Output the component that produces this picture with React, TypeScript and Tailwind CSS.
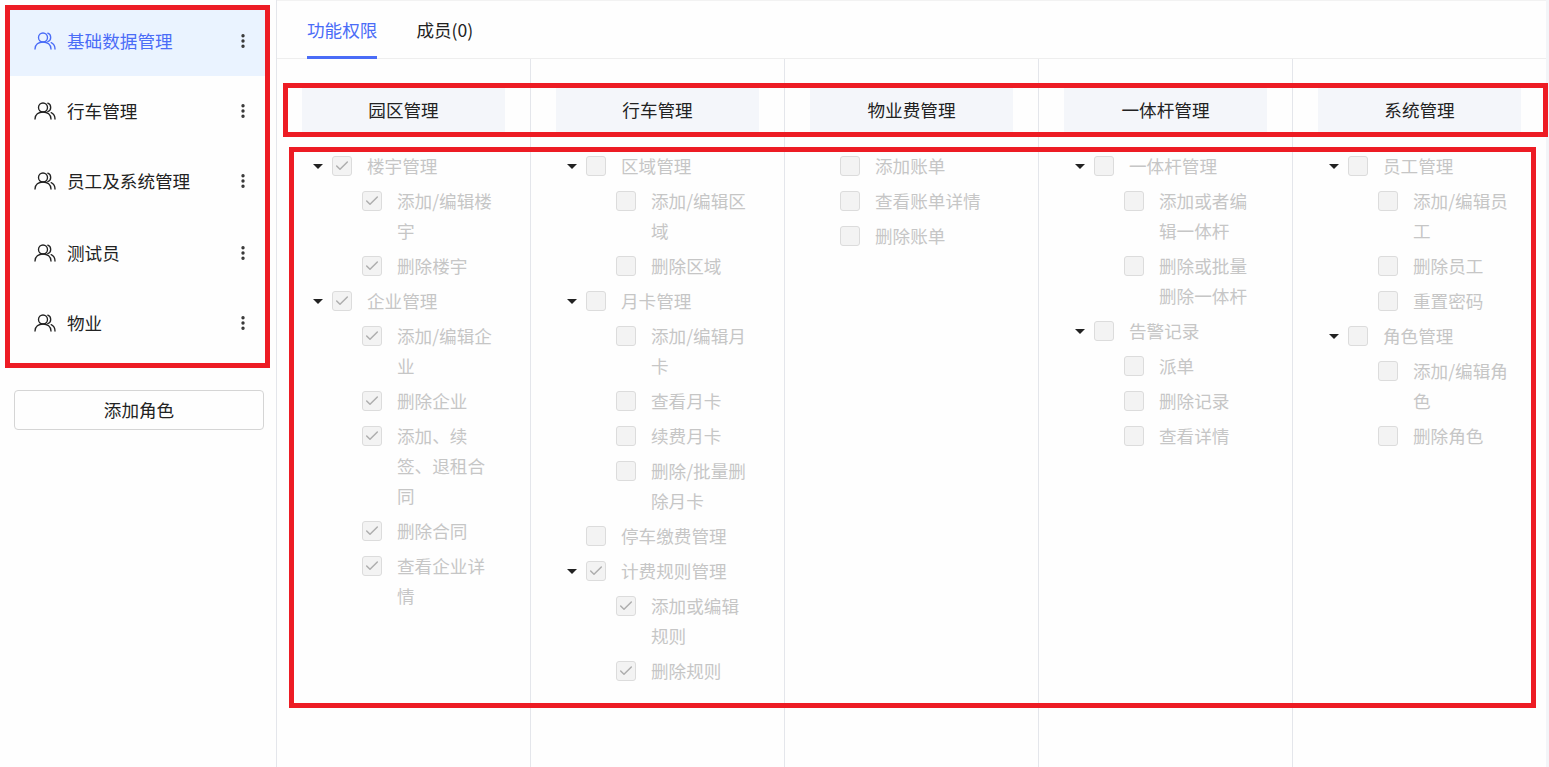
import { Check, EllipsisVertical } from 'lucide-react';

type TreeNode = { label: string; checked?: boolean; caret?: boolean; children?: TreeNode[] };

const roles = ['基础数据管理', '行车管理', '员工及系统管理', '测试员', '物业'];

const columns: { title: string; nodes: TreeNode[] }[] = [
    {
        title: '园区管理',
        nodes: [
            { label: '楼宇管理', checked: true, caret: true, children: [
                { label: '添加/编辑楼宇', checked: true },
                { label: '删除楼宇', checked: true },
            ] },
            { label: '企业管理', checked: true, caret: true, children: [
                { label: '添加/编辑企业', checked: true },
                { label: '删除企业', checked: true },
                { label: '添加、续签、退租合同', checked: true },
                { label: '删除合同', checked: true },
                { label: '查看企业详情', checked: true },
            ] },
        ],
    },
    {
        title: '行车管理',
        nodes: [
            { label: '区域管理', caret: true, children: [{ label: '添加/编辑区域' }, { label: '删除区域' }] },
            { label: '月卡管理', caret: true, children: [
                { label: '添加/编辑月卡' },
                { label: '查看月卡' },
                { label: '续费月卡' },
                { label: '删除/批量删除月卡' },
            ] },
            { label: '停车缴费管理' },
            { label: '计费规则管理', checked: true, caret: true, children: [
                { label: '添加或编辑规则', checked: true },
                { label: '删除规则', checked: true },
            ] },
        ],
    },
    {
        title: '物业费管理',
        nodes: [{ label: '添加账单' }, { label: '查看账单详情' }, { label: '删除账单' }],
    },
    {
        title: '一体杆管理',
        nodes: [
            { label: '一体杆管理', caret: true, children: [{ label: '添加或者编辑一体杆' }, { label: '删除或批量删除一体杆' }] },
            { label: '告警记录', caret: true, children: [{ label: '派单' }, { label: '删除记录' }, { label: '查看详情' }] },
        ],
    },
    {
        title: '系统管理',
        nodes: [
            { label: '员工管理', caret: true, children: [{ label: '添加/编辑员工' }, { label: '删除员工' }, { label: '重置密码' }] },
            { label: '角色管理', caret: true, children: [{ label: '添加/编辑角色' }, { label: '删除角色' }] },
        ],
    },
];

function PeopleIcon() {
    return (
        <svg width="22" height="18" viewBox="0 0 22 18" fill="none" stroke="currentColor" strokeWidth="1.35" strokeLinecap="round" className="shrink-0">
            <circle cx="9" cy="5.5" r="4.5" />
            <path d="M1 17c0-4.4 3.6-7 8-7s8 2.6 8 7" />
            <path d="M13.8 1.2a4.5 4.5 0 0 1 0 8.4" />
            <path d="M17.2 10.6c2.2 1 3.8 3.4 3.8 6.4" />
        </svg>
    );
}

function TreeRow({ node, child }: { node: TreeNode; child?: boolean }) {
    return (
        <div className={child ? 'mb-[5px] flex pl-[30px]' : 'mb-[5px] flex'}>
            <span className="flex h-[30px] w-[30px] shrink-0 items-center justify-center">
                {node.caret && <span className="ml-[1px] h-0 w-0 border-x-[5px] border-t-[5px] border-x-transparent border-t-[#222]" />}
            </span>
            <span className="flex h-[30px] w-[20px] shrink-0 items-center">
                <span className="flex h-[20px] w-[20px] items-center justify-center rounded-[3px] border border-[#dcdcdc] bg-[#f3f3f3]">
                    {node.checked && <Check size={16} strokeWidth={2.2} className="text-[#aeaeae]" />}
                </span>
            </span>
            <span className={child ? 'ml-[15px] w-[104px] text-[#c6c6c6]' : 'ml-[15px] text-[#c6c6c6]'}>{node.label}</span>
        </div>
    );
}

export default function App() {
    return (
        <div className="relative flex h-[767px] overflow-hidden bg-[#fefefe] text-[17.6px] leading-[30px] text-[#222] [font-family:'Noto_Sans_CJK_SC','Liberation_Sans',sans-serif]">
            <aside className="w-[277px] shrink-0 border-r border-[#e4e6eb] pt-[6px]">
                <ul className="ml-[5px] w-[261px]">
                    {roles.map((role, i) => (
                        <li
                            key={role}
                            className={
                                i === 0
                                    ? 'flex h-[70px] items-center bg-[#eaf3ff] pr-[14px] pl-[29px] text-[#4a6cf7]'
                                    : i === 2
                                      ? 'flex h-[72px] items-center pr-[14px] pb-[2px] pl-[29px]'
                                      : 'flex h-[70px] items-center pr-[14px] pl-[29px]'
                            }
                        >
                            <PeopleIcon />
                            <span className="ml-[11px] flex-1">{role}</span>
                            <EllipsisVertical size={18} strokeWidth={2.5} className="text-[#333]" />
                        </li>
                    ))}
                </ul>
                <div className="mt-[32px] pr-[12px] pl-[14px]">
                    <button className="h-[40px] w-full rounded-[4px] border border-[#d5d5d5] bg-[#fefefe]">添加角色</button>
                </div>
            </aside>

            <main className="flex min-w-0 flex-1 flex-col">
                <div className="flex h-[59px] shrink-0 gap-[39px] border-y border-[#eeeeee] border-t-[#f2f2f2] pl-[30px]">
                    <span className="h-[58px] border-b-[3px] border-[#4a6cf7] pt-[14px] text-[#4a6cf7]">功能权限</span>
                    <span className="pt-[14px]">成员(0)</span>
                </div>
                <div className="flex flex-1">
                    {columns.map((col) => (
                        <section key={col.title} className="w-[254px] shrink-0 border-r border-[#e4e6eb] pt-[29px]">
                            <h3 className="mx-[25px] flex h-[44px] items-center justify-center bg-[#f4f6fa]">{col.title}</h3>
                            <div className="mt-[19px] pl-[25px]">
                                {col.nodes.map((node) => (
                                    <div key={node.label}>
                                        <TreeRow node={node} />
                                        {node.children?.map((c) => <TreeRow key={c.label} node={c} child />)}
                                    </div>
                                ))}
                            </div>
                        </section>
                    ))}
                </div>
            </main>
            <div className="w-[3px] shrink-0 bg-[#f3f5f8]" />

            {/* red annotation frames sit over the page */}
            <div className="pointer-events-none absolute top-[5px] left-[5px] h-[363px] w-[265px] border-[5px] border-[#ed1c24]" />
            <div className="pointer-events-none absolute top-[83px] left-[283px] h-[54px] w-[1265px] border-[5px] border-[#ed1c24]" />
            <div className="pointer-events-none absolute top-[147px] left-[289px] h-[561px] w-[1247px] border-[5px] border-[#ed1c24]" />
        </div>
    );
}
